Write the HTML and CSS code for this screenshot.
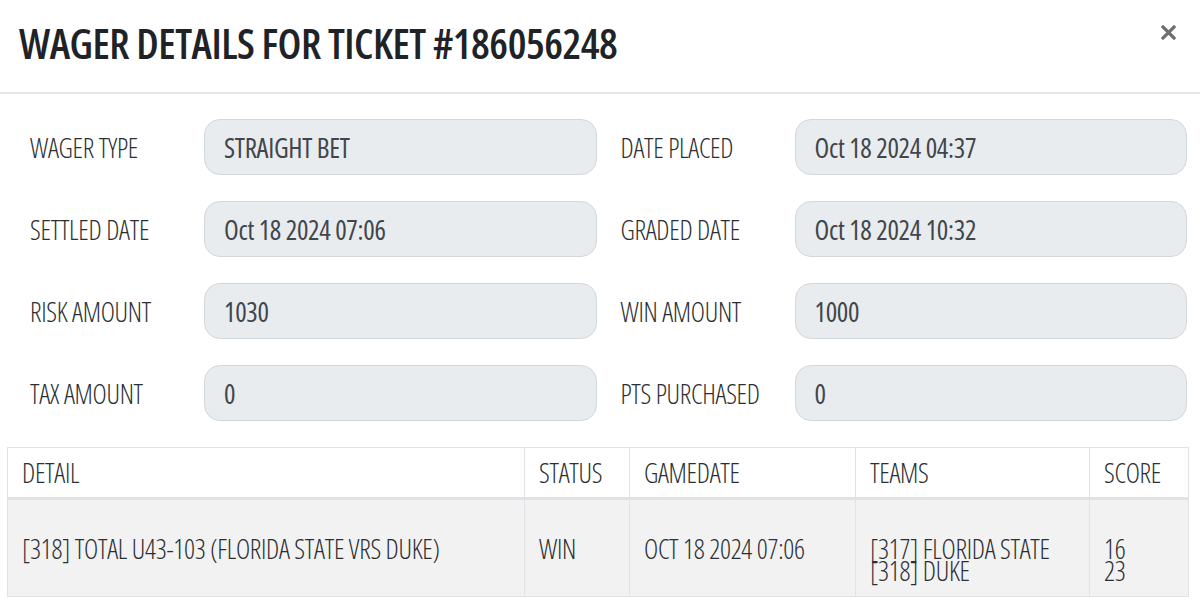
FILE: index.html
```html
<!DOCTYPE html>
<html lang="en">
<head>
<meta charset="utf-8">
<title>Wager Details</title>
<link rel="stylesheet" href="styles.css">
</head>
<body>
<div class="modal">
  <div class="modal-header">
    <h1 class="modal-title">WAGER DETAILS FOR TICKET #186056248</h1>
    <button class="close" type="button" aria-label="Close">
      <svg width="15" height="15" viewBox="0 0 15 15"><path d="M2 2 L13 13 M13 2 L2 13" stroke="#6f6f6f" stroke-width="3.2" stroke-linecap="square"/></svg>
    </button>
  </div>
  <div class="modal-body">
    <div class="form-grid">
      <div class="field"><span class="label">WAGER TYPE</span><div class="input">STRAIGHT BET</div></div>
      <div class="field"><span class="label">DATE PLACED</span><div class="input">Oct 18 2024 04:37</div></div>
      <div class="field"><span class="label">SETTLED DATE</span><div class="input">Oct 18 2024 07:06</div></div>
      <div class="field"><span class="label">GRADED DATE</span><div class="input">Oct 18 2024 10:32</div></div>
      <div class="field"><span class="label">RISK AMOUNT</span><div class="input">1030</div></div>
      <div class="field"><span class="label">WIN AMOUNT</span><div class="input">1000</div></div>
      <div class="field"><span class="label">TAX AMOUNT</span><div class="input">0</div></div>
      <div class="field"><span class="label">PTS PURCHASED</span><div class="input">0</div></div>
    </div>
    <table class="detail-table">
      <thead>
        <tr>
          <th class="c-detail">DETAIL</th>
          <th class="c-status">STATUS</th>
          <th class="c-date">GAMEDATE</th>
          <th class="c-teams">TEAMS</th>
          <th class="c-score">SCORE</th>
        </tr>
      </thead>
      <tbody>
        <tr>
          <td>[318] TOTAL U43-103 (FLORIDA STATE VRS DUKE)</td>
          <td>WIN</td>
          <td>OCT 18 2024 07:06</td>
          <td class="multi">[317] FLORIDA STATE<br>[318] DUKE</td>
          <td class="multi">16<br>23</td>
        </tr>
      </tbody>
    </table>
  </div>
</div>
</body>
</html>
```
FILE: styles.css
```css
* { box-sizing: border-box; }
html, body { margin: 0; padding: 0; background: #fff; }
body {
  font-family: "Open Sans", "Roboto", sans-serif;
  font-stretch: 75%;
  color: #212529;
  width: 1200px;
  height: 607px;
  overflow: hidden;
}
.modal { background: #fff; }
.modal-header {
  display: flex;
  align-items: flex-start;
  justify-content: space-between;
  height: 94px;
  padding: 16px 24px 0 19px;
  border-bottom: 2px solid #e3e5e8;
}
.modal-title {
  margin: 0;
  font-size: 42px;
  font-weight: 600;
  line-height: 54px;
  letter-spacing: -0.5px;
  color: #1f2328;
}
.close {
  margin-top: 9px;
  padding: 0;
  border: 0;
  background: none;
  width: 15px;
  height: 15px;
  display: block;
}
.close svg { display: block; }
.form-grid {
  display: grid;
  grid-template-columns: 1fr 1fr;
  column-gap: 24px;
  row-gap: 26px;
  padding: 25px 13px 0 30px;
}
.field {
  display: grid;
  grid-template-columns: 174px 1fr;
  align-items: center;
}
.label {
  font-size: 27px;
  font-weight: 300;
  color: #2b2f33;
  letter-spacing: -0.3px;
}
.input {
  height: 56px;
  display: flex;
  align-items: center;
  padding: 0 19px;
  background: #e9ecef;
  border: 1px solid #d3d7db;
  border-radius: 16px;
  font-size: 27px;
  font-weight: 400;
  color: #41464b;
  letter-spacing: -0.3px;
}
.detail-table {
  margin: 26px 12px 0 7px;
  width: 1181px;
  border-collapse: collapse;
  table-layout: fixed;
  font-size: 27px;
  font-weight: 300;
  color: #2b2f33;
}
.detail-table th, .detail-table td {
  border: 1px solid #e0e2e5;
  text-align: left;
  padding: 0 14px;
  letter-spacing: -0.3px;
}
.detail-table th {
  height: 51px;
  font-weight: 300;
  background: #fff;
  border-bottom: 3px solid #dfe2e6;
  vertical-align: middle;
}
.detail-table td {
  height: 98px;
  background: #f2f2f2;
  vertical-align: middle;
}
.detail-table td.multi { line-height: 22px; padding-top: 24px; }
.c-detail { width: 517px; }
.c-status { width: 105px; }
.c-date { width: 226px; }
.c-teams { width: 234px; }
.c-score { width: 99px; }
```
